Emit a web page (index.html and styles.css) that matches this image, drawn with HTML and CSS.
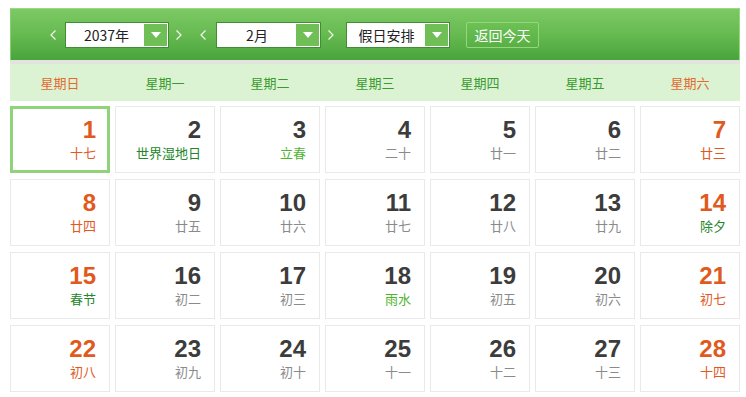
FILE: index.html
```html
<!DOCTYPE html>
<html lang="zh-CN">
<head>
<meta charset="utf-8">
<title>万年历</title>
<link rel="stylesheet" href="styles.css">
</head>
<body>
<div class="calendar">
  <div class="toolbar">
    <svg class="arrow arrow-first" viewBox="0 0 6 10" width="6" height="10"><polyline points="5.5,0.5 1,5 5.5,9.5" fill="none" stroke="#eef8ea" stroke-width="1.3"/></svg>
    <div class="select sel-year"><span class="sel-text">2037年</span><span class="sel-btn"><svg viewBox="0 0 10 6" width="10" height="6"><polygon points="0,0 10,0 5,6" fill="#fff"/></svg></span></div>
    <svg class="arrow arrow-next" viewBox="0 0 6 10" width="6" height="10"><polyline points="0.5,0.5 5,5 0.5,9.5" fill="none" stroke="#eef8ea" stroke-width="1.3"/></svg>
    <svg class="arrow arrow-prev2" viewBox="0 0 6 10" width="6" height="10"><polyline points="5.5,0.5 1,5 5.5,9.5" fill="none" stroke="#eef8ea" stroke-width="1.3"/></svg>
    <div class="select sel-month"><span class="sel-text">2月</span><span class="sel-btn"><svg viewBox="0 0 10 6" width="10" height="6"><polygon points="0,0 10,0 5,6" fill="#fff"/></svg></span></div>
    <svg class="arrow arrow-next" viewBox="0 0 6 10" width="6" height="10"><polyline points="0.5,0.5 5,5 0.5,9.5" fill="none" stroke="#eef8ea" stroke-width="1.3"/></svg>
    <div class="select sel-holiday"><span class="sel-text">假日安排</span><span class="sel-btn"><svg viewBox="0 0 10 6" width="10" height="6"><polygon points="0,0 10,0 5,6" fill="#fff"/></svg></span></div>
    <div class="today-btn">返回今天</div>
  </div>
  <div class="divider"></div>
  <div class="weekdays">
    <div class="wk weekend">星期日</div>
    <div class="wk">星期一</div>
    <div class="wk">星期二</div>
    <div class="wk">星期三</div>
    <div class="wk">星期四</div>
    <div class="wk">星期五</div>
    <div class="wk weekend">星期六</div>
  </div>
  <div class="days">
    <div class="day weekend today"><div class="num">1</div><div class="lunar">十七</div></div>
    <div class="day"><div class="num">2</div><div class="lunar fest">世界湿地日</div></div>
    <div class="day"><div class="num">3</div><div class="lunar term">立春</div></div>
    <div class="day"><div class="num">4</div><div class="lunar">二十</div></div>
    <div class="day"><div class="num">5</div><div class="lunar">廿一</div></div>
    <div class="day"><div class="num">6</div><div class="lunar">廿二</div></div>
    <div class="day weekend"><div class="num">7</div><div class="lunar">廿三</div></div>

    <div class="day weekend"><div class="num">8</div><div class="lunar">廿四</div></div>
    <div class="day"><div class="num">9</div><div class="lunar">廿五</div></div>
    <div class="day"><div class="num">10</div><div class="lunar">廿六</div></div>
    <div class="day"><div class="num">11</div><div class="lunar">廿七</div></div>
    <div class="day"><div class="num">12</div><div class="lunar">廿八</div></div>
    <div class="day"><div class="num">13</div><div class="lunar">廿九</div></div>
    <div class="day weekend"><div class="num">14</div><div class="lunar fest">除夕</div></div>

    <div class="day weekend"><div class="num">15</div><div class="lunar fest">春节</div></div>
    <div class="day"><div class="num">16</div><div class="lunar">初二</div></div>
    <div class="day"><div class="num">17</div><div class="lunar">初三</div></div>
    <div class="day"><div class="num">18</div><div class="lunar term">雨水</div></div>
    <div class="day"><div class="num">19</div><div class="lunar">初五</div></div>
    <div class="day"><div class="num">20</div><div class="lunar">初六</div></div>
    <div class="day weekend"><div class="num">21</div><div class="lunar">初七</div></div>

    <div class="day weekend"><div class="num">22</div><div class="lunar">初八</div></div>
    <div class="day"><div class="num">23</div><div class="lunar">初九</div></div>
    <div class="day"><div class="num">24</div><div class="lunar">初十</div></div>
    <div class="day"><div class="num">25</div><div class="lunar">十一</div></div>
    <div class="day"><div class="num">26</div><div class="lunar">十二</div></div>
    <div class="day"><div class="num">27</div><div class="lunar">十三</div></div>
    <div class="day weekend"><div class="num">28</div><div class="lunar">十四</div></div>
  </div>
</div>
</body>
</html>
```
FILE: styles.css
```css
* { box-sizing: border-box; }
html, body { margin: 0; padding: 0; background: #fff; }
body {
  font-family: "Noto Sans CJK SC", "Liberation Sans", sans-serif;
  font-size: 13px;
}
.calendar {
  width: 730px;
  margin: 8px 0 0 10px;
}
.toolbar {
  height: 52px;
  display: flex;
  align-items: center;
  padding-left: 40px;
  background: linear-gradient(#7dc965, #66ba50 50%, #48a43d);
  border-top: 1px solid #98da80;
  border-left: 1px solid #86d06e;
  border-right: 1px solid #95d77e;
}
.arrow { flex: none; display: block; }
.arrow-first { margin-left: -1px; }
.arrow-next { margin-left: 7px; }
.arrow-prev2 { margin-left: 18px; }
.select {
  flex: none;
  height: 26px;
  display: flex;
  align-items: stretch;
  background: #fff;
  border: 1px solid #3f8e34;
  padding: 1px;
  margin-left: 9px;
}
.sel-year { width: 104px; }
.sel-month { width: 105px; margin-left: 10px; }
.sel-holiday { width: 104px; margin-left: 12px; }
.sel-text {
  flex: 1;
  display: flex;
  align-items: center;
  justify-content: center;
  color: #222;
  font-size: 14px;
}
.sel-year .sel-text { padding-left: 2px; }
.sel-btn {
  flex: none;
  width: 23px;
  background: #6fbf56;
  display: flex;
  align-items: center;
  justify-content: center;
}
.sel-btn svg { display: block; }
.today-btn {
  flex: none;
  margin-left: 16px;
  width: 73px;
  height: 26px;
  border: 1px solid #93d97b;
  border-radius: 2px;
  background: linear-gradient(#6dc155, #58b044);
  color: #fff;
  font-size: 14px;
  display: flex;
  align-items: center;
  justify-content: center;
}
.divider {
  height: 4px;
  background: #e3e4de;
}
.weekdays {
  height: 37px;
  background: #dcf3d3;
  display: grid;
  grid-template-columns: repeat(7, 100px);
  column-gap: 5px;
  align-items: center;
}
.wk {
  text-align: center;
  color: #3a9a2e;
  font-size: 13px;
}
.wk.weekend { color: #e26a30; }
.days {
  margin-top: 5px;
  display: grid;
  grid-template-columns: repeat(7, 100px);
  grid-auto-rows: 67px;
  column-gap: 5px;
  row-gap: 6px;
}
.day {
  border: 1px solid #e9e9e9;
  background: #fff;
  padding: 9px 13px 0 0;
  text-align: right;
}
.day.today {
  border-color: #8fd47b;
  box-shadow: inset 0 0 0 2px #8fd47b;
}
.num {
  font-family: "Liberation Sans", Arial, sans-serif;
  font-weight: bold;
  font-size: 24px;
  line-height: 28px;
  color: #3c3c3c;
}
.lunar {
  font-size: 13px;
  line-height: 18px;
  color: #8a8a8a;
}
.weekend .num { color: #e05a1e; }
.weekend .lunar { color: #e05a1e; }
.lunar.fest, .weekend .lunar.fest { color: #22862a; }
.lunar.term { color: #4fb32f; }
```
